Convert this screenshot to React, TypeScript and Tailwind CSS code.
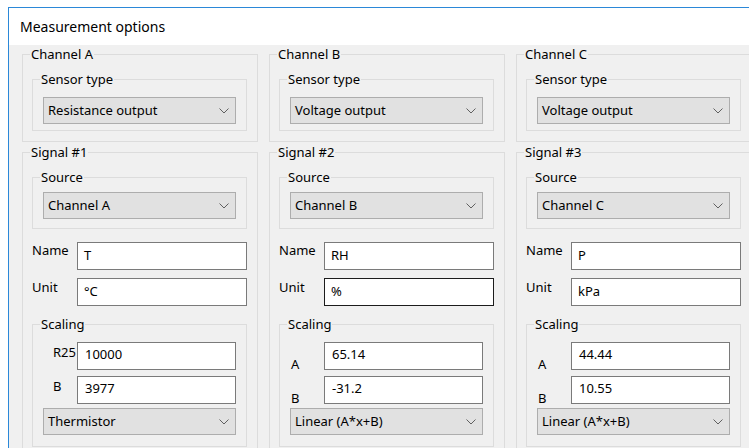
import React from "react";

type ScaleRow = { label: string; value: string };

type Column = {
  channel: string;
  sensor: string;
  signal: string;
  source: string;
  name: string;
  unit: string;
  unitFocused?: boolean;
  rows: ScaleRow[];
  mode: string;
  thermistor?: boolean;
};

const columns: Column[] = [
  {
    channel: "Channel A",
    sensor: "Resistance output",
    signal: "Signal #1",
    source: "Channel A",
    name: "T",
    unit: "°C",
    rows: [
      { label: "R25", value: "10000" },
      { label: "B", value: "3977" },
    ],
    mode: "Thermistor",
    thermistor: true,
  },
  {
    channel: "Channel B",
    sensor: "Voltage output",
    signal: "Signal #2",
    source: "Channel B",
    name: "RH",
    unit: "%",
    unitFocused: true,
    rows: [
      { label: "A", value: "65.14" },
      { label: "B", value: "-31.2" },
    ],
    mode: "Linear (A*x+B)",
  },
  {
    channel: "Channel C",
    sensor: "Voltage output",
    signal: "Signal #3",
    source: "Channel C",
    name: "P",
    unit: "kPa",
    rows: [
      { label: "A", value: "44.44" },
      { label: "B", value: "10.55" },
    ],
    mode: "Linear (A*x+B)",
  },
];

function Chevron() {
  return (
    <svg width="10" height="6" viewBox="0 0 10 6" className="shrink-0">
      <polyline
        points="0.5,0.5 5,5 9.5,0.5"
        fill="none"
        stroke="#606060"
        strokeWidth="1"
      />
    </svg>
  );
}

function Combo({ value }: { value: string }) {
  return (
    <div className="flex h-[27px] items-center justify-between border border-[#adadad] bg-[#e1e1e1] pl-[4px] pr-[6px]">
      <span>{value}</span>
      <Chevron />
    </div>
  );
}

function Group({
  title,
  className,
  children,
}: {
  title: string;
  className?: string;
  children: React.ReactNode;
}) {
  return (
    <fieldset
      className={
        "m-0 min-w-0 border border-[#dcdcdc] p-0 " + (className ?? "")
      }
    >
      <legend className="ml-[7px] px-[1px] leading-[16px]">{title}</legend>
      {children}
    </fieldset>
  );
}

function TextBox({
  value,
  focused,
  scaled,
}: {
  value: string;
  focused?: boolean;
  scaled?: boolean;
}) {
  return (
    <div
      className={
        "flex h-[28px] min-w-0 flex-1 items-center border bg-white " +
        (focused ? "border-[#1c1c1c] " : "border-[#7a7a7a] ") +
        (scaled ? "pl-[7px] pb-[3px]" : "pl-[6px]")
      }
    >
      {value}
    </div>
  );
}

function ChannelColumn({ col }: { col: Column }) {
  return (
    <div className="flex w-[236px] shrink-0 flex-col">
      <Group title={col.channel}>
        <div className="pl-[9px] pr-[10px] pt-[9px] pb-[10px]">
          <Group title="Sensor type">
            <div className="px-[10px] pt-[10px] pb-[6px]">
              <Combo value={col.sensor} />
            </div>
          </Group>
        </div>
      </Group>

      <Group title={col.signal} className="mt-[2px]">
        <div className="pl-[9px] pr-[10px] pt-[9px] pb-[10px]">
          <Group title="Source">
            <div className="px-[10px] pt-[7px] pb-[9px]">
              <Combo value={col.source} />
            </div>
          </Group>

          <div className="mt-[13px] flex">
            <div className="w-[45px] shrink-0 leading-[16px]">Name</div>
            <TextBox value={col.name} />
          </div>
          <div className="mt-[8px] flex">
            <div className="w-[45px] shrink-0 pt-[1px] leading-[16px]">
              Unit
            </div>
            <TextBox value={col.unit} focused={col.unitFocused} />
          </div>

          <Group title="Scaling" className="mt-[10px]">
            <div className="px-[10px] pt-[10px] pb-[11px]">
              {col.rows.map((r, i) => (
                <div
                  key={r.label}
                  className={
                    "flex " +
                    (i > 0 ? "mt-[6px] " : "") +
                    (col.thermistor ? "items-start" : "items-end")
                  }
                >
                  <div
                    className={
                      "w-[34px] shrink-0 leading-[16px] " +
                      (col.thermistor
                        ? "pl-[10px] pt-[2px]"
                        : "pl-[1px] mb-[-2px]")
                    }
                  >
                    {r.label}
                  </div>
                  <TextBox value={r.value} scaled />
                </div>
              ))}
              <div className="mt-[4px]">
                <Combo value={col.mode} />
              </div>
            </div>
          </Group>
        </div>
      </Group>
    </div>
  );
}

export default function App() {
  return (
    <div className="relative h-[448px] w-[749px] overflow-hidden bg-white font-['Noto_Sans',sans-serif] text-[13px] text-black">
      <div className="ml-[8px] mt-[7px] h-[500px] w-[760px] border-l border-t border-[#2b88d8] bg-[#f0f0f0]">
        <div className="flex h-[37px] items-center bg-white pl-[11px] text-[14px]">
          Measurement options
        </div>
        <div className="flex gap-[11px] pl-[13px] pt-[1px]">
          {columns.map((c) => (
            <ChannelColumn key={c.signal} col={c} />
          ))}
        </div>
      </div>
    </div>
  );
}
